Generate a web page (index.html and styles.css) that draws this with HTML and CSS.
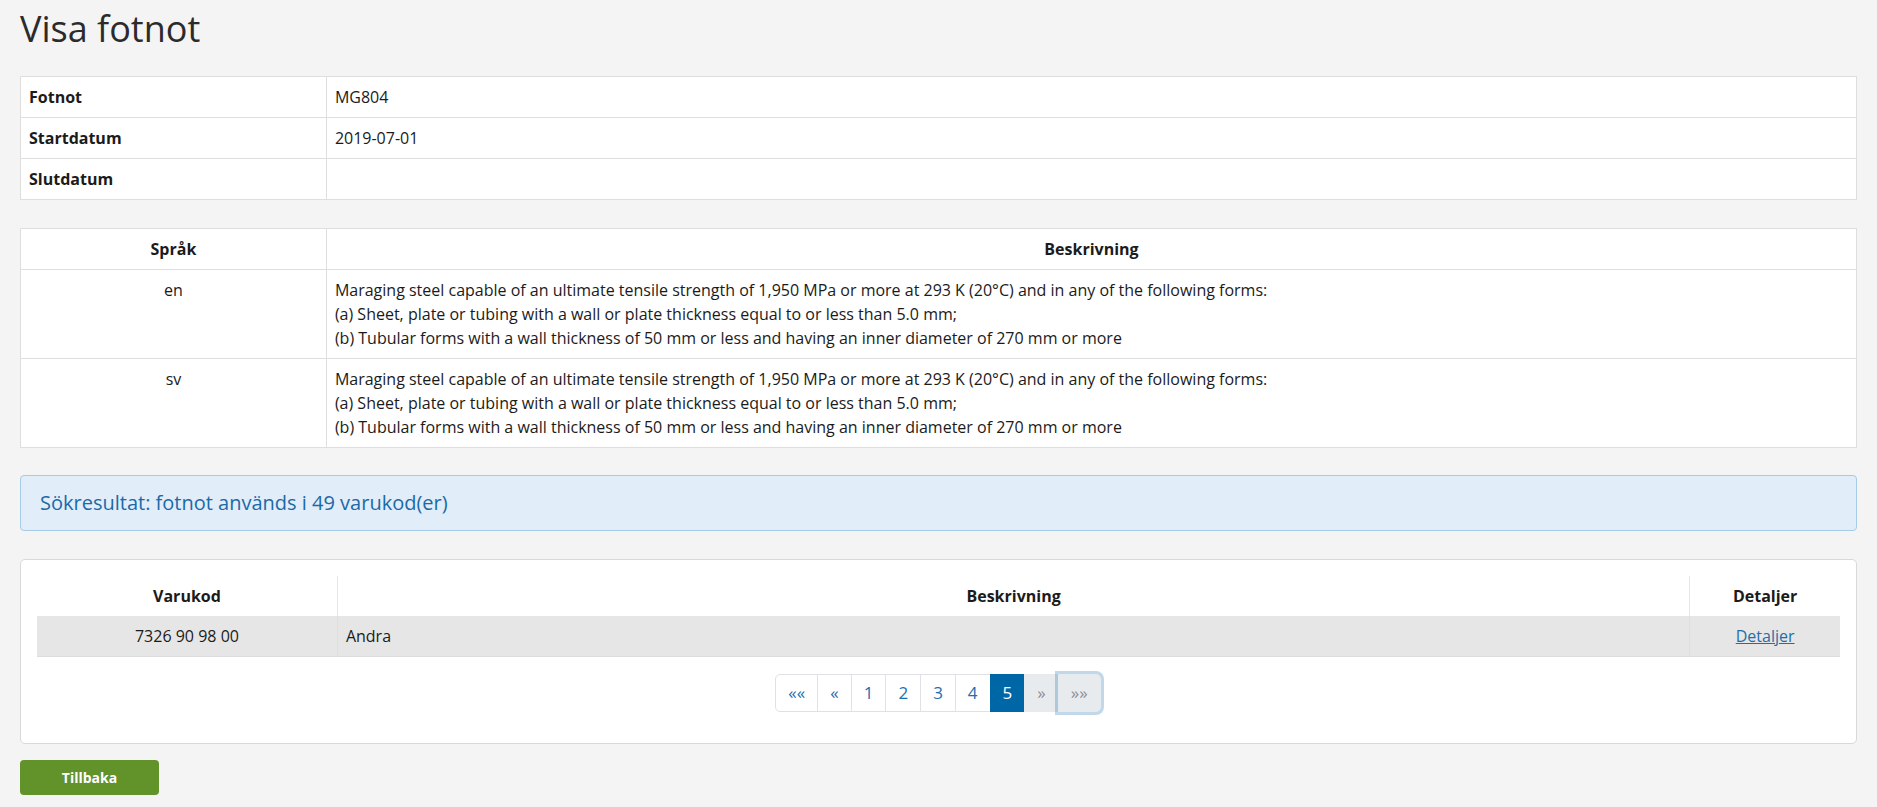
FILE: index.html
```html
<!DOCTYPE html>
<html lang="sv">
<head>
    <meta charset="UTF-8">
    <meta name="viewport" content="width=device-width, initial-scale=1.0">
    <title>Visa fotnot</title>
    <link rel="stylesheet" href="styles.css">
</head>
<body>
    <div class="container">
        <h1>Visa fotnot</h1>

        <!-- Fotnot info -->
        <table class="info-table">
            <tr>
                <th class="col-label">Fotnot</th>
                <td>MG804</td>
            </tr>
            <tr>
                <th class="col-label">Startdatum</th>
                <td>2019-07-01</td>
            </tr>
            <tr>
                <th class="col-label">Slutdatum</th>
                <td></td>
            </tr>
        </table>

        <!-- Beskrivningar -->
        <table class="info-table desc-table">
            <tr>
                <th class="col-label center">Språk</th>
                <th class="center">Beskrivning</th>
            </tr>
            <tr>
                <td class="center">en</td>
                <td>Maraging steel capable of an ultimate tensile strength of 1,950 MPa or more at 293 K (20°C) and in any of the following forms:<br>
                    (a) Sheet, plate or tubing with a wall or plate thickness equal to or less than 5.0 mm;<br>
                    (b) Tubular forms with a wall thickness of 50 mm or less and having an inner diameter of 270 mm or more</td>
            </tr>
            <tr>
                <td class="center">sv</td>
                <td>Maraging steel capable of an ultimate tensile strength of 1,950 MPa or more at 293 K (20°C) and in any of the following forms:<br>
                    (a) Sheet, plate or tubing with a wall or plate thickness equal to or less than 5.0 mm;<br>
                    (b) Tubular forms with a wall thickness of 50 mm or less and having an inner diameter of 270 mm or more</td>
            </tr>
        </table>

        <div class="alert-info">Sökresultat: fotnot används i 49 varukod(er)</div>

        <!-- Resultat -->
        <div class="panel">
            <table class="result-table">
                <thead>
                    <tr>
                        <th class="col-code">Varukod</th>
                        <th class="col-desc">Beskrivning</th>
                        <th class="col-link">Detaljer</th>
                    </tr>
                </thead>
                <tbody>
                    <tr>
                        <td class="center">7326 90 98 00</td>
                        <td>Andra</td>
                        <td class="center"><a href="#">Detaljer</a></td>
                    </tr>
                </tbody>
            </table>

            <ul class="pagination">
                <li><a href="#">««</a></li>
                <li><a href="#">«</a></li>
                <li><a href="#">1</a></li>
                <li><a href="#">2</a></li>
                <li><a href="#">3</a></li>
                <li><a href="#">4</a></li>
                <li class="active"><a href="#">5</a></li>
                <li class="disabled"><a href="#">»</a></li>
                <li class="disabled focused"><a href="#">»»</a></li>
            </ul>
        </div>

        <button class="btn-back">Tillbaka</button>
    </div>
</body>
</html>
```

FILE: styles.css
```css
/* Globalt */
body {
    font-family: 'Open Sans', 'Noto Sans', sans-serif;
    font-size: 16px;
    line-height: 24px;
    color: #1b1b1b;
    background: #f4f4f4;
    margin: 0;
}

.container {
    padding: 0 20px;
}

h1 {
    font-size: 36px;
    font-weight: 400;
    line-height: 43px;
    color: #2b2b2b;
    margin: 7px 0 26px;
}

/* Tabeller */
.info-table {
    width: 100%;
    border-collapse: collapse;
    background: #ffffff;
    margin-bottom: 28px;
}

.info-table th,
.info-table td {
    border: 1px solid #dedede;
    padding: 8px;
    text-align: left;
    vertical-align: top;
}

.info-table th {
    font-weight: 700;
}

.col-label {
    width: 16.66%;
}

.center {
    text-align: center !important;
}

.desc-table {
    margin-bottom: 27px;
}

/* Sökresultat */
.alert-info {
    background: #e1edf9;
    border: 1px solid #a6cbe6;
    border-radius: 4px;
    color: #1a6aa8;
    font-size: 20px;
    line-height: 26px;
    padding: 14px 19px;
    margin-bottom: 28px;
}

/* Panel */
.panel {
    background: #ffffff;
    border: 1px solid #d9d9d9;
    border-radius: 5px;
    padding: 16px 16px 31px;
}

.result-table {
    width: 100%;
    border-collapse: collapse;
}

.result-table th {
    font-weight: 700;
    text-align: center;
    padding: 8px;
    border-left: 1px solid #e6e6e6;
}

.result-table th:first-child {
    border-left: none;
}

.result-table td {
    background: #e6e6e6;
    border-bottom: 1px solid #dcdcdc;
    border-left: 1px solid #dedede;
    padding: 8px;
}

.result-table td:first-child {
    border-left: none;
}

.col-code { width: 16.66%; }
.col-desc { width: 75%; }
.col-link { width: 8.33%; }

a {
    color: #1f6ea6;
}

/* Sidnumrering */
.pagination {
    display: flex;
    justify-content: center;
    list-style: none;
    margin: 17px 0 0;
    padding: 0;
}

.pagination li a {
    display: block;
    font-size: 17px;
    line-height: 24px;
    padding: 6px 12px;
    border: 1px solid #dee2e6;
    margin-left: -1px;
    background: #ffffff;
    color: #1a70b0;
    text-decoration: none;
}

.pagination li:first-child a {
    border-radius: 5px 0 0 5px;
}

.pagination li:last-child a {
    border-radius: 0 5px 5px 0;
}

.pagination .active a {
    background: #0067a7;
    border-color: #0067a7;
    color: #ffffff;
}

.pagination .disabled a {
    background: #e8ebee;
    border-color: #e8ebee;
    color: #8b9096;
}

.pagination .focused a {
    box-shadow: 0 0 0 3px rgba(30, 115, 175, 0.28);
    position: relative;
}

/* Knapp */
.btn-back {
    margin-top: 16px;
    width: 139px;
    height: 35px;
    background: #62922a;
    color: #ffffff;
    border: none;
    border-radius: 4px;
    font-family: 'Open Sans', sans-serif;
    font-size: 14px;
    font-weight: 700;
    cursor: pointer;
}
```
